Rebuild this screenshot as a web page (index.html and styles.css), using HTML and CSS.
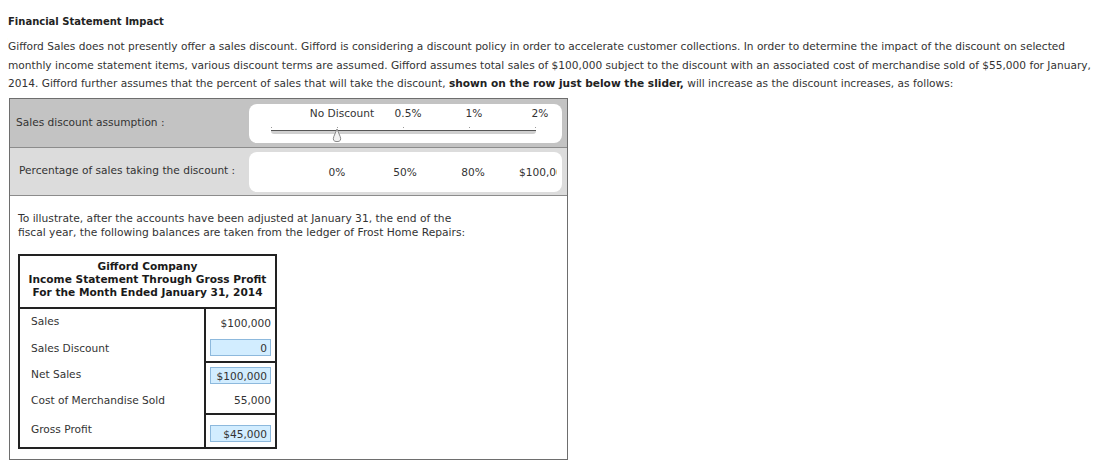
FILE: index.html
```html
<!DOCTYPE html>
<html>
<head>
<meta charset="utf-8">
<title>Financial Statement Impact</title>
<link rel="stylesheet" href="styles.css">
</head>
<body>
<h1 class="title">Financial Statement Impact</h1>
<p class="intro">Gifford Sales does not presently offer a sales discount. Gifford is considering a discount policy in order to accelerate customer collections. In order to determine the impact of the discount on selected<br>monthly income statement items, various discount terms are assumed. Gifford assumes total sales of $100,000 subject to the discount with an associated cost of merchandise sold of $55,000 for January,<br>2014. Gifford further assumes that the percent of sales that will take the discount, <b>shown on the row just below the slider,</b> will increase as the discount increases, as follows:</p>

<div class="panel">
  <div class="row row-dark">
    <div class="row-label">Sales discount assumption :</div>
    <div class="card slider">
      <div class="slider-labels">
        <span>No Discount</span><span>0.5%</span><span>1%</span><span>2%</span>
      </div>
      <div class="track">
        <div class="ticks"><i></i><i></i><i></i><i></i><i></i></div>
        <div class="bar"></div>
        <svg class="handle" width="12" height="15" viewBox="0 0 12 15">
          <path d="M6 1 L9.2 8.6 Q11 13.6 6 13.6 Q1 13.6 2.8 8.6 Z" fill="#f2f2f2" stroke="#8a8a8a" stroke-width="1"/>
        </svg>
      </div>
    </div>
  </div>
  <div class="row row-light">
    <div class="row-label row-label-2">Percentage of sales taking the discount :</div>
    <div class="card values">
      <span>0%</span><span>50%</span><span>80%</span><span class="clip">$100,000</span>
    </div>
  </div>
  <div class="body">
    <p class="lead">To illustrate, after the accounts have been adjusted at January 31, the end of the<br>fiscal year, the following balances are taken from the ledger of Frost Home Repairs:</p>
    <div class="stmt">
      <div class="stmt-head">
        <div>Gifford Company</div>
        <div>Income Statement Through Gross Profit</div>
        <div>For the Month Ended January 31, 2014</div>
      </div>
      <div class="stmt-body">
        <div class="lbl r1">Sales</div>
        <div class="val r1">$100,000</div>
        <div class="lbl r2">Sales Discount</div>
        <div class="val r2"><span class="box box-0">0</span></div>
        <div class="lbl r3">Net Sales</div>
        <div class="val r3 ruled"><span class="box">$100,000</span></div>
        <div class="lbl r4">Cost of Merchandise Sold</div>
        <div class="val r4">55,000</div>
        <div class="lbl r5">Gross Profit</div>
        <div class="val r5 ruled"><span class="box">$45,000</span></div>
      </div>
    </div>
  </div>
</div>
</body>
</html>
```
FILE: styles.css
```css
html, body {
  background: #ffffff;
}
body {
  margin: 8px;
  font-family: "DejaVu Sans", Verdana, sans-serif;
  font-size: 10.6px;
  color: #333333;
}
.title {
  margin: 7px 0 0 0;
  font-size: 10px;
  line-height: 14px;
  font-weight: bold;
  color: #222222;
}
.intro {
  margin: 8px -8px 0 0;
  line-height: 18.7px;
  white-space: nowrap;
}
.intro b {
  color: #222222;
}
.panel {
  margin: 5px 0 0 1px;
  width: 557px;
  border: 1px solid #6e6e6e;
}
.row {
  display: flex;
  align-items: flex-start;
  border-bottom: 1px solid #8c8c8c;
}
.row-dark {
  background: #c3c3c3;
  height: 49px;
  padding-top: 5px;
  box-sizing: border-box;
}
.row-light {
  background: #dcdcdc;
  height: 48px;
  padding-top: 4px;
  box-sizing: border-box;
}
.row-label {
  width: 233px;
  padding-left: 6px;
  line-height: 14px;
  align-self: center;
}
.row-dark .row-label {
  margin-top: -8px;
}
.row-label-2 {
  padding-left: 9px;
  width: 230px;
  margin-top: -8px;
}
.card {
  width: 313px;
  background: #ffffff;
  border-radius: 8px;
  box-sizing: border-box;
}
.slider {
  height: 39px;
  padding-top: 2px;
}
.slider-labels {
  display: grid;
  grid-template-columns: repeat(4, 66px);
  padding-left: 60px;
  line-height: 14px;
  text-align: center;
  white-space: nowrap;
}
.track {
  position: relative;
  margin: 7px 0 0 22px;
  width: 265px;
  height: 16px;
}
.ticks {
  display: flex;
  justify-content: space-between;
}
.ticks i {
  display: block;
  width: 1px;
  height: 1px;
  background: #9a9a9a;
}
.bar {
  margin-top: 2px;
  height: 3px;
  border-top: 1px solid #555555;
  background: #cfcfcf;
  border-radius: 0 0 3px 3px;
}
.handle {
  position: absolute;
  left: 60px;
  top: 1px;
}
.values {
  height: 40px;
  display: grid;
  grid-template-columns: 68px 68px 68px 1fr;
  align-items: center;
  padding: 0 5px 0 54px;
  text-align: center;
}
.values .clip {
  text-align: left;
  padding-left: 12px;
  overflow: hidden;
  white-space: nowrap;
}
.body {
  padding: 16px 0 10px 8px;
}
.lead {
  margin: 0;
  font-size: 10.7px;
  line-height: 14px;
}
.stmt {
  margin-top: 14px;
  width: 255px;
  border: 2px solid #222222;
}
.stmt-head {
  padding: 4px 0 8px 0;
  text-align: center;
  font-weight: bold;
  line-height: 13px;
  color: #1a1a1a;
  border-bottom: 2px solid #222222;
}
.stmt-body {
  display: grid;
  grid-template-columns: 186px 69px;
  grid-template-rows: 25px 27px 26px 26px 34px;
}
.lbl {
  display: flex;
  align-items: center;
  padding-left: 11px;
  border-right: 2px solid #222222;
}
.val {
  display: flex;
  align-items: center;
  justify-content: flex-end;
  padding-right: 4px;
}
.r1.lbl { padding-bottom: 2px; }
.r1.val { padding-top: 2px; }
.ruled {
  border-top: 2px solid #222222;
}
.r5.lbl { padding-bottom: 2px; }
.r5.val { padding-top: 5px; }
.box {
  display: block;
  width: 61px;
  height: 17px;
  line-height: 17px;
  box-sizing: border-box;
  padding-right: 3px;
  text-align: right;
  background: #d2edff;
  border: 1px solid #8db9dd;
}
```
